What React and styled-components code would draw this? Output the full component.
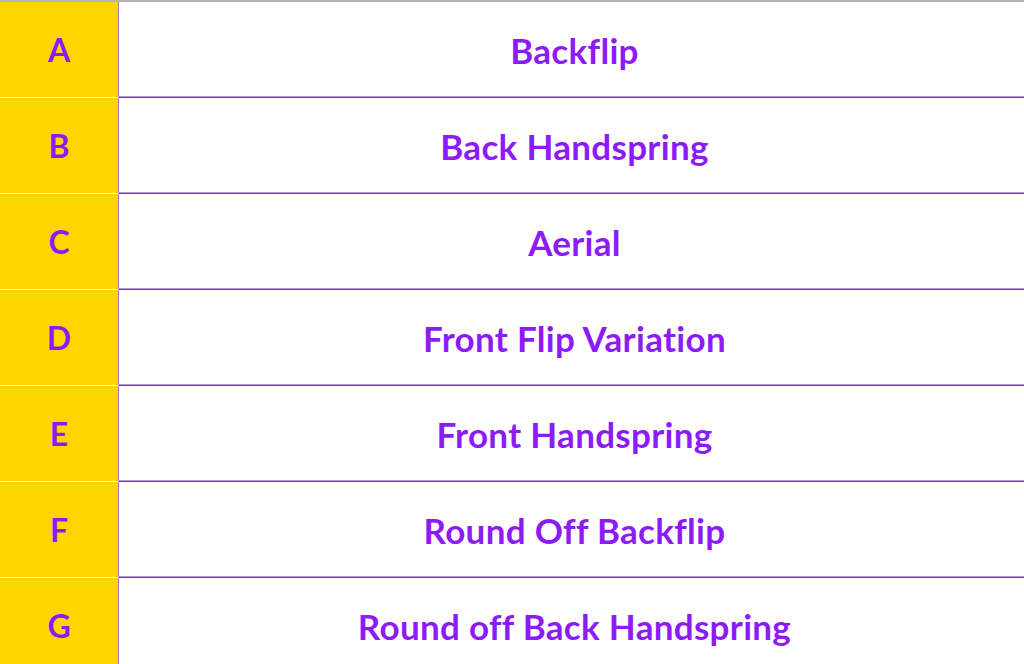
import React from "react";
import styled, { createGlobalStyle } from "styled-components";

const GlobalStyle = createGlobalStyle`
  html, body {
    margin: 0;
    padding: 0;
    background: #ffffff;
    overflow: hidden;
  }
`;

const Table = styled.div`
  width: 1024px;
  border-top: 2px solid #b4b4b4;
  font-family: Lato, "Open Sans", sans-serif;
  font-weight: 700;
  font-variant-ligatures: none;
  color: #8c1bf8;
`;

const Row = styled.div`
  display: grid;
  grid-template-columns: 119px 1fr;
  height: 96px;
`;

const LetterCell = styled.div`
  display: flex;
  align-items: center;
  justify-content: center;
  background: #ffd500;
  border-right: 1px solid #9d7cc6;
  border-bottom: 1px solid ${(p) => (p.last ? "#ffd500" : "#ffffff")};
  font-size: 32px;
`;

const NameCell = styled.div`
  display: flex;
  align-items: center;
  justify-content: center;
  background: #ffffff;
  border-bottom: 1px solid #7a30cc;
  box-shadow: inset 0 -1px 0 #b793e2;
  font-size: 35px;
  letter-spacing: 0.3px;
  padding-left: 6px;
`;

const moves = [
  ["A", "Backflip"],
  ["B", "Back Handspring"],
  ["C", "Aerial"],
  ["D", "Front Flip Variation"],
  ["E", "Front Handspring"],
  ["F", "Round Off Backflip"],
  ["G", "Round off Back Handspring"],
];

const App = () => {
  return (
    <>
      <GlobalStyle />
      <Table>
        {moves.map(([letter, name], i) => (
          <Row key={letter}>
            <LetterCell last={i === moves.length - 1}>{letter}</LetterCell>
            <NameCell>{name}</NameCell>
          </Row>
        ))}
      </Table>
    </>
  );
};

export default App;
